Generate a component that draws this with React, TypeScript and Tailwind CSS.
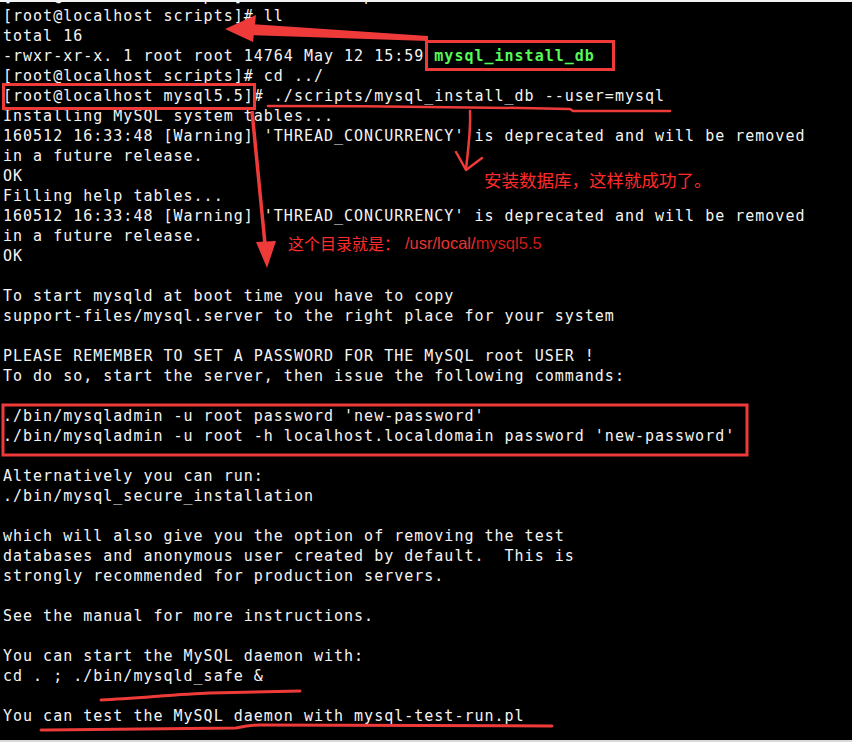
const lines: string[] = [
  "[root@localhost scripts]# cd ../scripts",
  "[root@localhost scripts]# ll",
  "total 16",
  "",
  "[root@localhost scripts]# cd ../",
  "[root@localhost mysql5.5]# ./scripts/mysql_install_db --user=mysql",
  "Installing MySQL system tables...",
  "160512 16:33:48 [Warning] 'THREAD_CONCURRENCY' is deprecated and will be removed",
  "in a future release.",
  "OK",
  "Filling help tables...",
  "160512 16:33:48 [Warning] 'THREAD_CONCURRENCY' is deprecated and will be removed",
  "in a future release.",
  "OK",
  "",
  "To start mysqld at boot time you have to copy",
  "support-files/mysql.server to the right place for your system",
  "",
  "PLEASE REMEMBER TO SET A PASSWORD FOR THE MySQL root USER !",
  "To do so, start the server, then issue the following commands:",
  "",
  "./bin/mysqladmin -u root password 'new-password'",
  "./bin/mysqladmin -u root -h localhost.localdomain password 'new-password'",
  "",
  "Alternatively you can run:",
  "./bin/mysql_secure_installation",
  "",
  "which will also give you the option of removing the test",
  "databases and anonymous user created by default.  This is",
  "strongly recommended for production servers.",
  "",
  "See the manual for more instructions.",
  "",
  "You can start the MySQL daemon with:",
  "cd . ; ./bin/mysqld_safe &",
  "",
  "You can test the MySQL daemon with mysql-test-run.pl",
  "",
];

const red = "#ef3a3a";

export default function App() {
  return (
    <div className="relative w-[852px] h-[742px] overflow-hidden bg-black">
      {/* terminal text */}
      <div className="-mt-[14px] pl-[3px] flex flex-col whitespace-pre font-['DejaVu_Sans_Mono',monospace] text-[15px] leading-[20px] tracking-[1px] text-[#f4f4f4]">
        {lines.map((l, i) =>
          i === 3 ? (
            <div key={i} className="h-[20px]">
              -rwxr-xr-x. 1 root root 14764 May 12 15:59{" "}
              <span className="font-bold text-[#58f858]">mysql_install_db</span>
            </div>
          ) : (
            <div key={i} className="h-[20px]">
              {l}
            </div>
          )
        )}
      </div>

      {/* page edges */}
      <div className="absolute top-0 left-0 w-full h-[2px] bg-[#f2f2f2]" />
      <div className="absolute bottom-0 left-0 w-full h-[2px] bg-[#d9d9d9]" />

      {/* annotations */}
      <svg className="absolute inset-0" width="852" height="742" viewBox="0 0 852 742">
        <g fill="none" stroke={red} strokeWidth="3">
          <rect x="426.5" y="41.5" width="187" height="28" />
          <rect x="3.5" y="84.5" width="251" height="24" />
          <rect x="3" y="405" width="744" height="50" />
        </g>

        {/* arrow to ll */}
        <polygon points="250,24 428,36 428,41 250,35" fill={red} />
        <polygon points="225,29 256,15 253,42" fill={red} />

        <g fill="none" stroke={red} strokeWidth="2.5" strokeLinecap="round" strokeLinejoin="round">
          <path d="M268,106 C350,106 450,107 520,108 L570,109 L573,111 L670,111" />
          <path d="M470,111 C471,130 468,150 466,169" />
          <path d="M456,152 L466,170 L482,158" />
        </g>

        {/* long arrow down */}
        <line x1="252" y1="111" x2="265" y2="244" stroke={red} strokeWidth="3.5" />
        <polygon points="267,268 256,242 276,241" fill={red} />

        <g fill="none" stroke={red} strokeWidth="3" strokeLinecap="round">
          <path d="M101,700 C140,698 180,694 210,693 L300,691" />
          <path d="M41,730 C120,729 200,728 236,728 C245,726 250,725 260,725 L552,726" />
        </g>
      </svg>

      {/* notes */}
      <div className="absolute left-[484px] top-[169px] leading-[22px] text-[17.5px] text-[#ff2b2b] font-['Noto_Sans_CJK_SC',sans-serif]">
        安装数据库，这样就成功了。
      </div>
      <div className="absolute left-[288px] top-[233px] flex items-center leading-[20px] text-[16px] text-[#ff2b2b] font-['Noto_Sans_CJK_SC',sans-serif]">
        <span>这个目录就是：</span>
        <span className="ml-[5px] text-[16.5px] font-['Liberation_Sans',sans-serif]">
          <span className="text-[#e83434]">/usr/local/</span>
          <span className="text-[#cf1c1c]">mysql5.5</span>
        </span>
      </div>
    </div>
  );
}
